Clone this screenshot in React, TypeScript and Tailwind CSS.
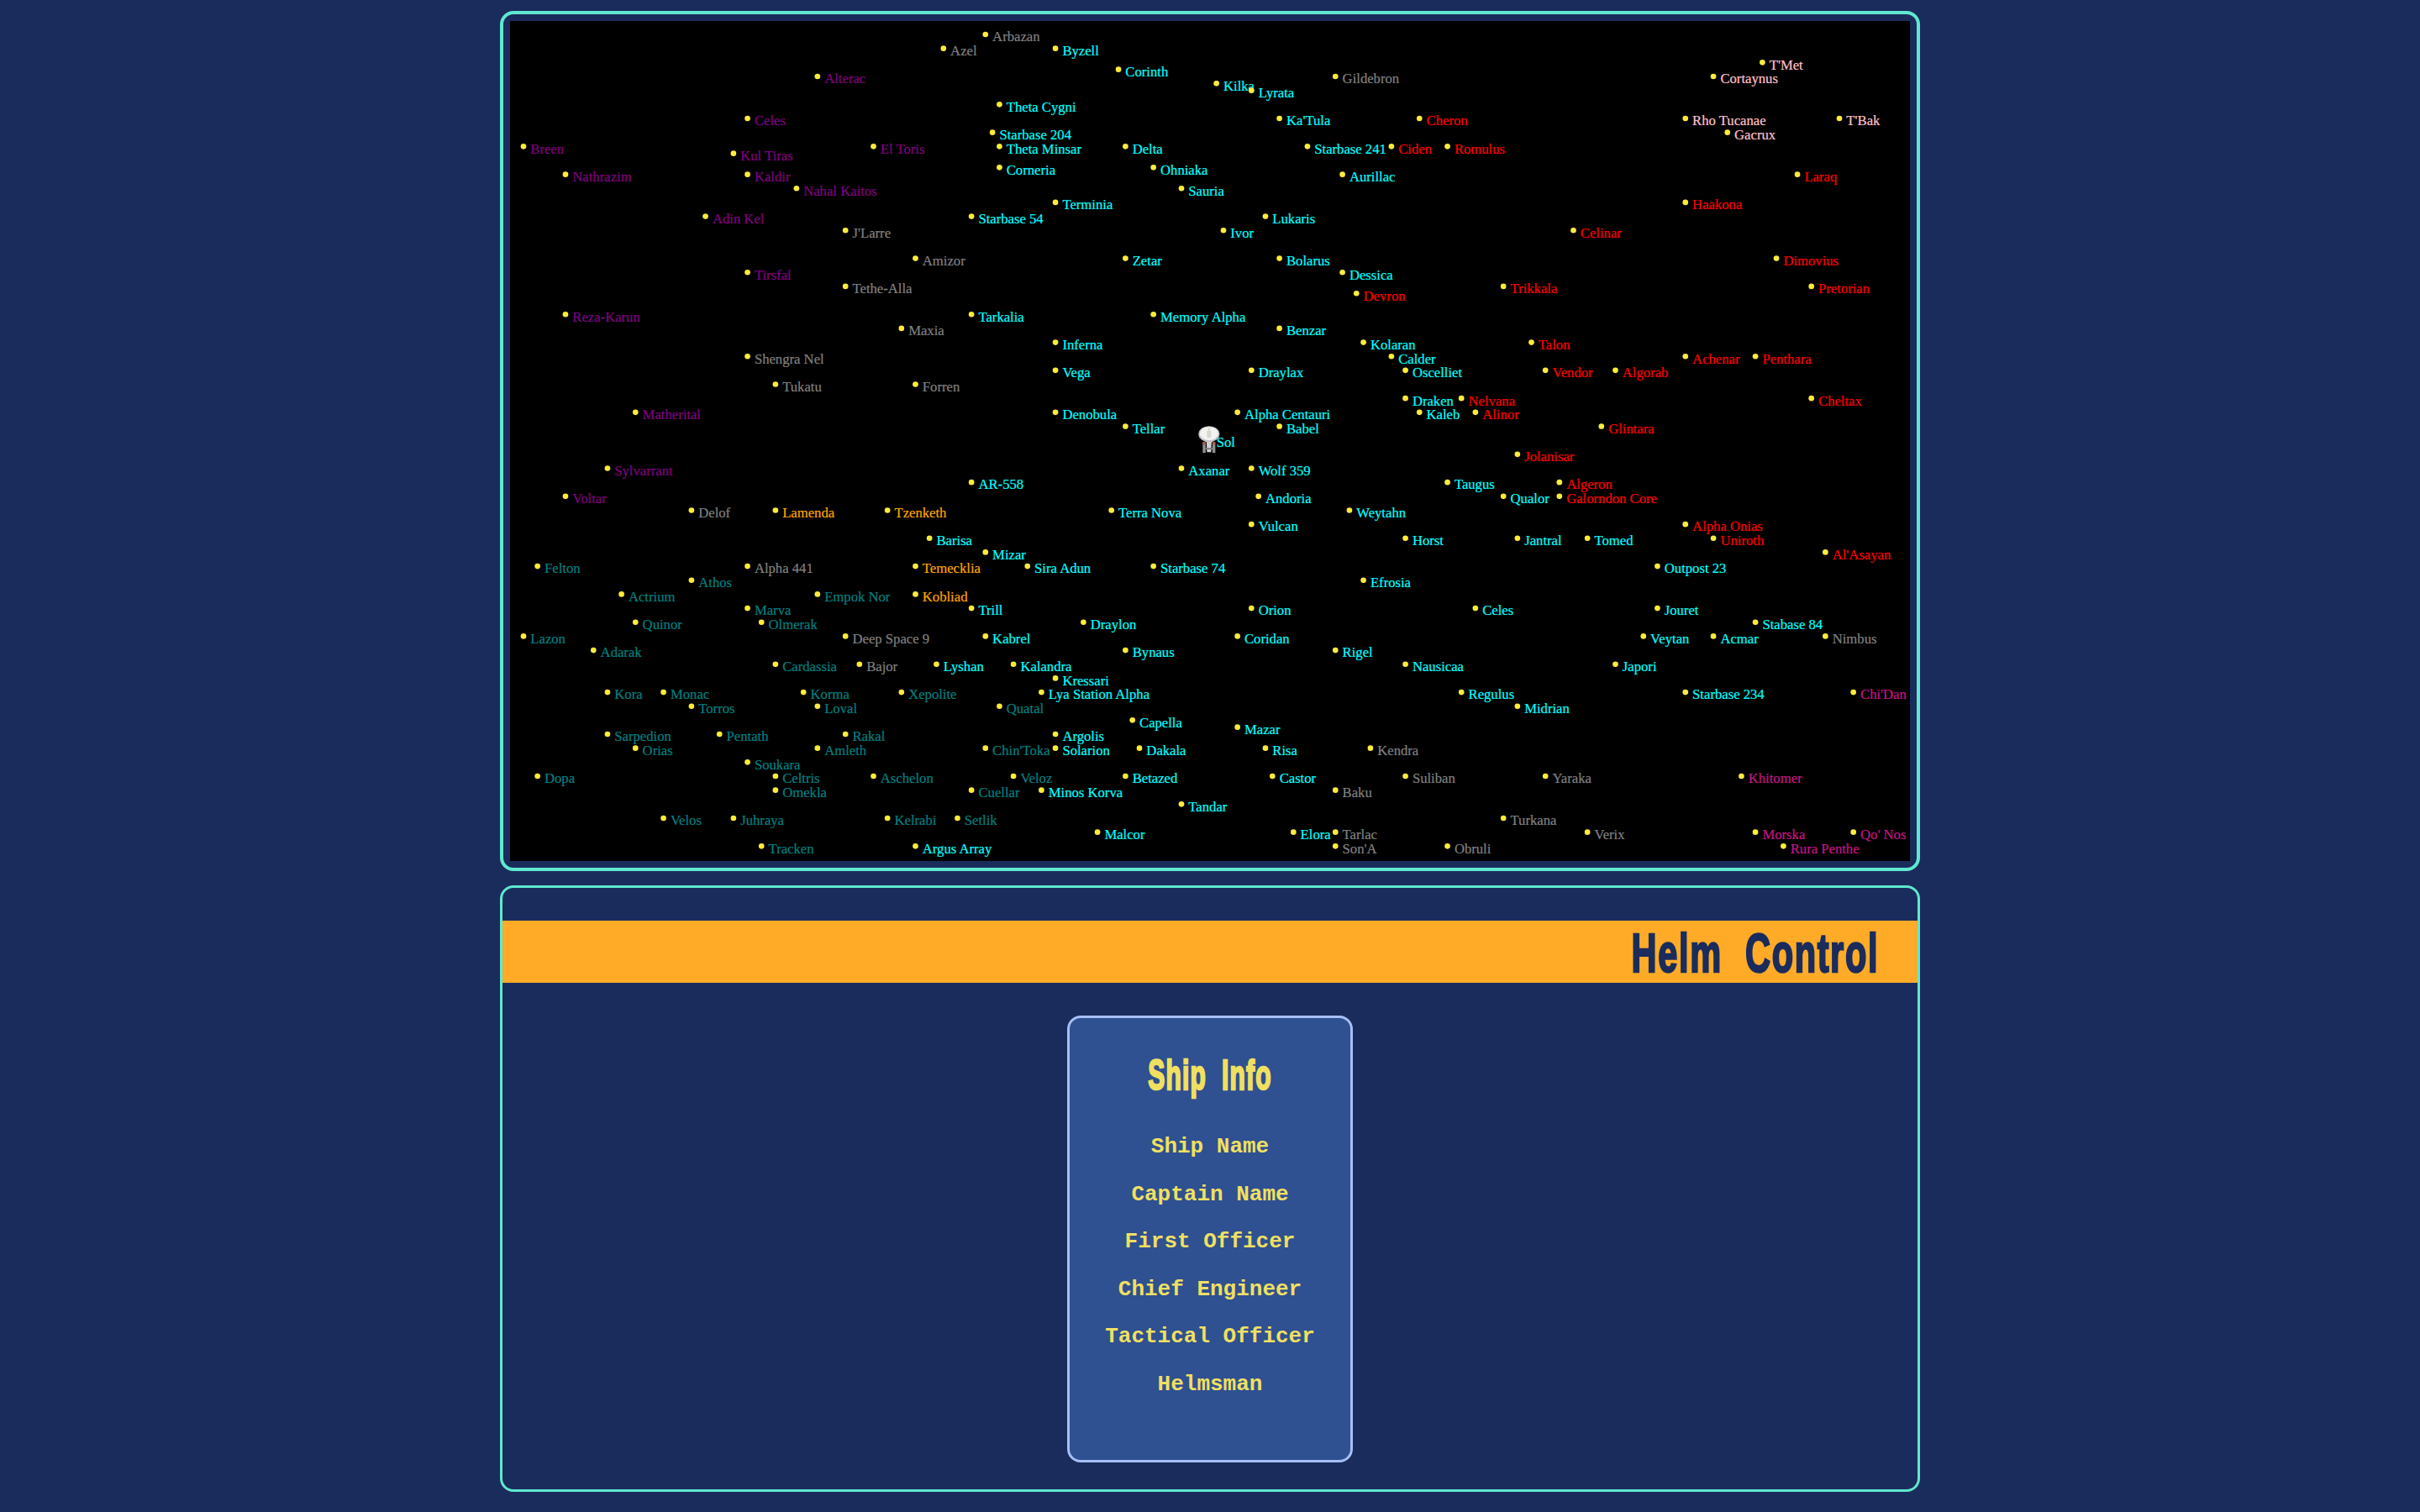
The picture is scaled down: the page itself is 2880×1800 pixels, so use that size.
const stars: Record<string, [string, number, number][]> = {
  "#00ffff": [
    ["Byzell", 39, 2], ["Corinth", 43.5, 3.5], ["Kilka", 50.5, 4.5], ["Lyrata", 53, 5], ["Theta Cygni", 35, 6],
    ["Ka'Tula", 55, 7], ["Starbase 204", 34.5, 8], ["Theta Minsar", 35, 9], ["Delta", 44, 9], ["Starbase 241", 57, 9],
    ["Corneria", 35, 10.5], ["Ohniaka", 46, 10.5], ["Aurillac", 59.5, 11], ["Sauria", 48, 12], ["Terminia", 39, 13],
    ["Starbase 54", 33, 14], ["Lukaris", 54, 14], ["Ivor", 51, 15], ["Zetar", 44, 17], ["Bolarus", 55, 17],
    ["Dessica", 59.5, 18], ["Tarkalia", 33, 21], ["Memory Alpha", 46, 21], ["Benzar", 55, 22], ["Inferna", 39, 23],
    ["Kolaran", 61, 23], ["Calder", 63, 24], ["Vega", 39, 25], ["Draylax", 53, 25], ["Oscelliet", 64, 25],
    ["Draken", 64, 27], ["Denobula", 39, 28], ["Alpha Centauri", 52, 28], ["Kaleb", 65, 28], ["Tellar", 44, 29],
    ["Babel", 55, 29], ["Sol", 50, 30], ["Axanar", 48, 32], ["Wolf 359", 53, 32], ["AR-558", 33, 33],
    ["Taugus", 67, 33], ["Andoria", 53.5, 34], ["Qualor", 71, 34], ["Terra Nova", 43, 35], ["Weytahn", 60, 35],
    ["Vulcan", 53, 36], ["Barisa", 30, 37], ["Horst", 64, 37], ["Jantral", 72, 37], ["Tomed", 77, 37],
    ["Mizar", 34, 38], ["Sira Adun", 37, 39], ["Starbase 74", 46, 39], ["Outpost 23", 82, 39], ["Efrosia", 61, 40],
    ["Trill", 33, 42], ["Orion", 53, 42], ["Celes", 69, 42], ["Jouret", 82, 42], ["Draylon", 41, 43],
    ["Stabase 84", 89, 43], ["Kabrel", 34, 44], ["Coridan", 52, 44], ["Veytan", 81, 44], ["Acmar", 86, 44],
    ["Bynaus", 44, 45], ["Rigel", 59, 45], ["Lyshan", 30.5, 46], ["Kalandra", 36, 46], ["Nausicaa", 64, 46],
    ["Japori", 79, 46], ["Kressari", 39, 47], ["Lya Station Alpha", 38, 48], ["Regulus", 68, 48], ["Starbase 234", 84, 48],
    ["Midrian", 72, 49], ["Capella", 44.5, 50], ["Mazar", 52, 50.5], ["Argolis", 39, 51], ["Solarion", 39, 52],
    ["Dakala", 45, 52], ["Risa", 54, 52], ["Betazed", 44, 54], ["Castor", 54.5, 54], ["Minos Korva", 38, 55],
    ["Tandar", 48, 56], ["Malcor", 42, 58], ["Elora", 56, 58], ["Argus Array", 29, 59],
  ],
  "#808080": [
    ["Arbazan", 34, 1], ["Azel", 31, 2], ["Gildebron", 59, 4], ["J'Larre", 24, 15], ["Amizor", 29, 17],
    ["Tethe-Alla", 24, 19], ["Maxia", 28, 22], ["Shengra Nel", 17, 24], ["Tukatu", 19, 26], ["Forren", 29, 26],
    ["Delof", 13, 35], ["Alpha 441", 17, 39], ["Deep Space 9", 24, 44], ["Nimbus", 94, 44], ["Bajor", 25, 46],
    ["Kendra", 61.5, 52], ["Suliban", 64, 54], ["Yaraka", 74, 54], ["Baku", 59, 55], ["Turkana", 71, 57],
    ["Tarlac", 59, 58], ["Verix", 77, 58], ["Son'A", 59, 59], ["Obruli", 67, 59],
  ],
  "#800080": [
    ["Alterac", 22, 4], ["Celes", 17, 7], ["Breen", 1, 9], ["El Toris", 26, 9], ["Kul Tiras", 16, 9.5],
    ["Nathrazim", 4, 11], ["Kaldir", 17, 11], ["Nahal Kaitos", 20.5, 12], ["Adin Kel", 14, 14], ["Tirsfal", 17, 18],
    ["Reza-Karun", 4, 21], ["Matherital", 9, 28], ["Sylvarrant", 7, 32], ["Voltar", 4, 34],
  ],
  "#ff0000": [
    ["Cheron", 65, 7], ["Ciden", 63, 9], ["Romulus", 67, 9], ["Laraq", 92, 11], ["Haakona", 84, 13],
    ["Celinar", 76, 15], ["Dimovius", 90.5, 17], ["Trikkala", 71, 19], ["Pretorian", 93, 19], ["Devron", 60.5, 19.5],
    ["Talon", 73, 23], ["Achenar", 84, 24], ["Penthara", 89, 24], ["Vendor", 74, 25], ["Algorab", 79, 25],
    ["Nelvana", 68, 27], ["Cheltax", 93, 27], ["Alinor", 69, 28], ["Glintara", 78, 29], ["Jolanisar", 72, 31],
    ["Algeron", 75, 33], ["Galorndon Core", 75, 34], ["Alpha Onias", 84, 36], ["Uniroth", 86, 37], ["Al'Asayan", 94, 38],
  ],
  "#ffc0cb": [
    ["T'Met", 89.5, 3], ["Cortaynus", 86, 4], ["Rho Tucanae", 84, 7], ["T'Bak", 95, 7], ["Gacrux", 87, 8],
  ],
  "#ffa500": [
    ["Lamenda", 19, 35], ["Tzenketh", 27, 35], ["Temecklia", 29, 39], ["Kobliad", 29, 41],
  ],
  "#008080": [
    ["Felton", 2, 39], ["Athos", 13, 40], ["Actrium", 8, 41], ["Empok Nor", 22, 41], ["Marva", 17, 42],
    ["Quinor", 9, 43], ["Olmerak", 18, 43], ["Lazon", 1, 44], ["Adarak", 6, 45], ["Cardassia", 19, 46],
    ["Kora", 7, 48], ["Monac", 11, 48], ["Korma", 21, 48], ["Xepolite", 28, 48], ["Torros", 13, 49],
    ["Loval", 22, 49], ["Quatal", 35, 49], ["Sarpedion", 7, 51], ["Pentath", 15, 51], ["Rakal", 24, 51],
    ["Orias", 9, 52], ["Amleth", 22, 52], ["Chin'Toka", 34, 52], ["Soukara", 17, 53], ["Dopa", 2, 54],
    ["Celtris", 19, 54], ["Aschelon", 26, 54], ["Veloz", 36, 54], ["Omekla", 19, 55], ["Cuellar", 33, 55],
    ["Velos", 11, 57], ["Juhraya", 16, 57], ["Kelrabi", 27, 57], ["Setlik", 32, 57], ["Tracken", 18, 59],
  ],
  "#c71585": [
    ["Chi'Dan", 96, 48], ["Khitomer", 88, 54], ["Morska", 89, 58], ["Qo' Nos", 96, 58], ["Rura Penthe", 91, 59],
  ],
};

const crew = ["Ship Name", "Captain Name", "First Officer", "Chief Engineer", "Tactical Officer", "Helmsman"];

// the ship marker, drawn in screen pixels around Sol
const Ship = () => (
  <g transform="translate(50 30) scale(0.06)">
    <rect x="-8" y="2" width="3.5" height="13" fill="#8f8f8f" />
    <rect x="3.5" y="2" width="3.5" height="13" fill="#8f8f8f" />
    <rect x="-8" y="2" width="3.5" height="3" fill="#a85a4a" />
    <rect x="3.5" y="2" width="3.5" height="3" fill="#a85a4a" />
    <path d="M-3.5 1 L2.5 1 L2 14 L-3 14 Z" fill="#d2d2d2" />
    <rect x="-5" y="9" width="9" height="2" fill="#7d7d7d" />
    <ellipse cx="-0.5" cy="-7.5" rx="12.5" ry="9.5" fill="#c4c4c4" />
    <ellipse cx="-0.5" cy="-8" rx="11" ry="8" fill="#f2f2f2" />
    <rect x="-3" y="-12" width="5" height="9" rx="2" fill="#d8d8cc" />
    <rect x="-1.5" y="-14" width="2" height="1" fill="#c9b566" />
  </g>
);

const StarMap = () => (
  <svg viewBox="0.04 0.05 100 60" className="block h-[1000px] w-[1666px] bg-black font-['Liberation_Serif',serif]">
    {Object.entries(stars).map(([color, list]) =>
      list.map(([name, x, y]) => (
        <g key={name + x}>
          <circle cx={x} cy={y} r="0.2" fill="#ffeb3b" />
          <text x={x + 0.5} y={y + 0.5} fontSize="1" fill={color} stroke={color} strokeWidth="0.012">
            {name}
          </text>
        </g>
      )),
    )}
    <Ship />
  </svg>
);

export default function App() {
  return (
    <div className="flex min-h-screen flex-col items-center gap-[17px] bg-[#1a2c5b] pt-[13px]">
      <div className="w-[1690px] rounded-2xl border-4 border-[#5fe8d0] p-2">
        <StarMap />
      </div>

      <div className="h-[722px] w-[1690px] rounded-2xl border-[3px] border-[#5fe8d0] pt-[39px]">
        <div className="flex h-[74px] items-center justify-end bg-[#ffab28] pr-[46px]">
          <h1 className="origin-right translate-y-[2px] scale-x-[0.64] font-['Liberation_Sans',sans-serif] text-[65px] font-bold tracking-[2.5px] [word-spacing:22px] text-[#1a2c5b] [-webkit-text-stroke:2.5px_#1a2c5b]">
            Helm Control
          </h1>
        </div>

        <div className="flex justify-center pt-[39px]">
          <div className="h-[532px] w-[340px] rounded-2xl border-[3px] border-[#a6bff5] bg-[#2f5091] pt-[38px] text-center text-[#f0e060]">
            <h2 className="scale-x-[0.6] font-['Liberation_Sans',sans-serif] text-[50px] leading-[60px] font-bold tracking-[2px] [word-spacing:14px] [-webkit-text-stroke:2.5px_#f0e060]">
              Ship Info
            </h2>
            <ul className="mt-[27px] flex flex-col font-['Liberation_Mono',monospace] text-[26px] leading-[56.6px] font-bold">
              {crew.map((role) => (
                <li key={role}>{role}</li>
              ))}
            </ul>
          </div>
        </div>
      </div>
    </div>
  );
}
